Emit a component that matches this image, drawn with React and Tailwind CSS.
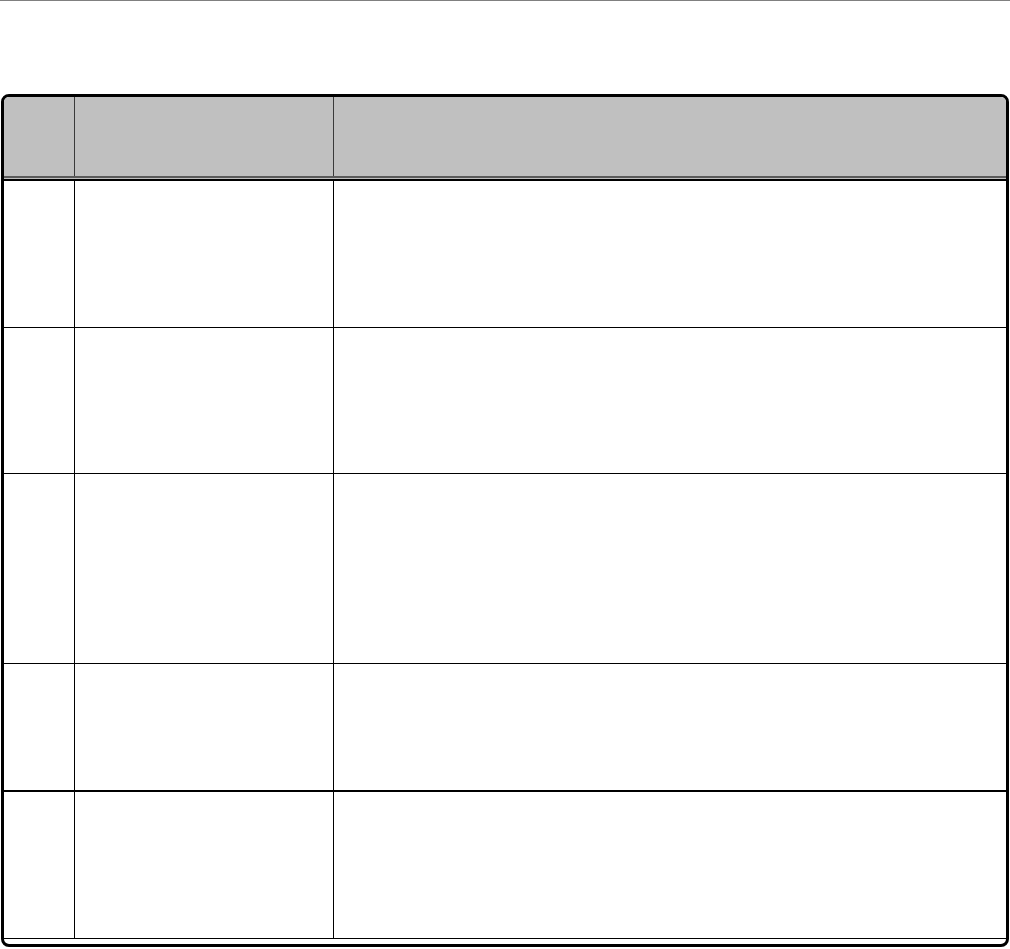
export default function App() {
  const rows = [
    { h: "h-[147px]", line: "border-b border-black" },
    { h: "h-[146px]", line: "border-b border-black" },
    { h: "h-[190px]", line: "border-b border-black" },
    { h: "h-[128px]", line: "border-b-2 border-black" },
    { h: "h-[147px]", line: "border-b border-black" },
  ];

  return (
    <div className="min-h-screen bg-white">
      <div className="h-px bg-[#808080]" />

      {/* Table */}
      <div className="mt-[93px] ml-px w-[1008px] border-[3px] border-black rounded-[8px] overflow-hidden pb-[5px] bg-white">
        <div className="flex h-[79px] bg-[#c0c0c0]">
          <div className="w-[71px] border-r border-[#3a3a3a]" />
          <div className="w-[259px] border-r border-[#3a3a3a]" />
          <div className="flex-1" />
        </div>
        <div className="h-[2px] bg-[#5a5a5a]" />
        <div className="h-px bg-[#c0c0c0]" />
        <div className="h-[2px] bg-black" />

        {rows.map((r, i) => (
          <div key={i} className={`flex ${r.h} ${r.line}`}>
            <div className="w-[71px] border-r border-black" />
            <div className="w-[259px] border-r border-black" />
            <div className="flex-1" />
          </div>
        ))}
      </div>
    </div>
  );
}
